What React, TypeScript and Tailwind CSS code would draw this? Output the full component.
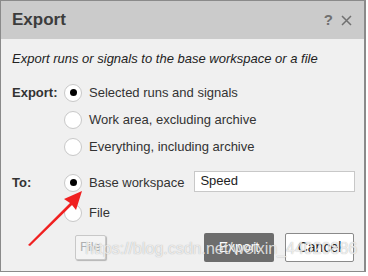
import React from "react";

function Radio({ checked }: { checked?: boolean }) {
  return (
    <span className="flex h-[18px] w-[18px] shrink-0 items-center justify-center rounded-full border border-[#c8c8c8] bg-white">
      {checked && <span className="h-[7px] w-[7px] rounded-full bg-black" />}
    </span>
  );
}

function Option({ label, checked }: { label: string; checked?: boolean }) {
  return (
    <div className="flex h-[18px] items-center gap-[7px]">
      <Radio checked={checked} />
      <span className="text-[13px] text-[#333]">{label}</span>
    </div>
  );
}

export default function App() {
  return (
    <div
      className="relative h-[276px] w-[368px] overflow-hidden bg-white"
      style={{ fontFamily: "Arial, 'Liberation Sans', sans-serif" }}
    >
      <div className="flex h-[272px] w-[366px] flex-col border border-r-2 border-[#8a8a8a] bg-[#f0f0f0]">
        <div className="flex h-[38px] items-center justify-between bg-[#cbcbcb] pl-[11px] pr-[12px]">
          <span className="text-[17px] font-bold text-[#3c3c3c]">Export</span>
          <div className="flex items-center gap-[8px] text-[#707070]">
            <span className="text-[15px] font-bold">?</span>
            <svg width="11" height="11" viewBox="0 0 11 11">
              <path d="M1 1 L10 10 M10 1 L1 10" stroke="#707070" strokeWidth="1.5" />
            </svg>
          </div>
        </div>

        <div className="px-[11px] pt-[10px] text-[13px] italic text-[#222]">
          Export runs or signals to the base workspace or a file
        </div>

        <div className="mt-[15px] flex pl-[11px]">
          <span className="w-[52px] text-[13px] font-bold leading-[18px] text-[#333]">Export:</span>
          <div className="flex flex-col gap-[9px]">
            <Option label="Selected runs and signals" checked />
            <Option label="Work area, excluding archive" />
            <Option label="Everything, including archive" />
          </div>
        </div>

        <div className="mt-[18px] flex pl-[11px]">
          <span className="w-[52px] text-[13px] font-bold leading-[18px] text-[#333]">To:</span>
          <div className="flex flex-col gap-[12px]">
            <Option label="Base workspace" checked />
            <Option label="File" />
          </div>
          <div className="ml-[10px] -mt-[3px] flex h-[21px] w-[161px] items-center border border-[#c8c8c8] bg-white px-[5px] text-[13px] text-[#222]">
            Speed
          </div>
        </div>

        <div className="mt-[11px] flex items-center pl-[74px] pr-[10px]">
          <div className="flex h-[25px] w-[31px] items-center justify-center rounded-[2px] border border-[#c8c8c8] bg-[#f4f4f4] text-[13px] text-[#b0b0b0] shadow-[1px_1px_1px_rgba(0,0,0,0.25)]">
            File
          </div>
          <div className="ml-auto flex gap-[11px]">
            <div className="flex h-[29px] w-[70px] items-center justify-center rounded-[2px] bg-[#6d6d6d] text-[14px] text-white">
              Export
            </div>
            <div className="flex h-[29px] w-[69px] items-center justify-center rounded-[2px] border border-[#8a8a8a] bg-white text-[14px] text-[#222]">
              Cancel
            </div>
          </div>
        </div>
      </div>

      <svg className="absolute left-0 top-0" width="368" height="276" viewBox="0 0 368 276">
        <path d="M28 245 L70 203 L64 199 L82 191 L76 210 L72 205 L30 246 Z" fill="#f02020" />
      </svg>

      <div className="absolute left-[85px] top-[237px] text-[16px] text-white/75 [text-shadow:0_0_1px_rgba(110,110,110,0.6)]">
        https://blog.csdn.net/weixin_44020886
      </div>
    </div>
  );
}
